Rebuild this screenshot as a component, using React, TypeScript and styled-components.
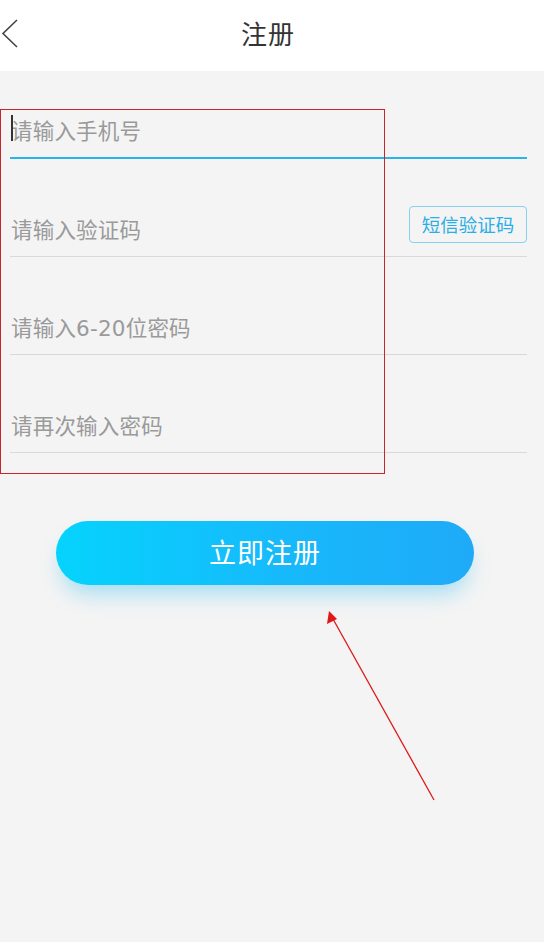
import React from 'react'
import styled, {createGlobalStyle} from 'styled-components'

const GlobalStyle = createGlobalStyle`
  html, body {
    margin: 0;
    padding: 0;
    background: #f4f4f4;
  }
  * {
    box-sizing: border-box;
  }
`

const font = `"Noto Sans CJK SC", "Noto Sans", sans-serif`
// latin digits in the inputs are the wider DejaVu ones, CJK falls through
const inputFont = `"DejaVu Sans", "Noto Sans CJK SC", sans-serif`

const Page = styled.div`
  position: relative;
  width: 544px;
  min-height: 942px;
  background: #f4f4f4;
  font-family: ${font};
  overflow: hidden;
`

const NavBar = styled.div`
  position: relative;
  height: 71px;
  background: #fff;
  display: flex;
  align-items: center;
  justify-content: center;
`

const BackButton = styled.button`
  position: absolute;
  left: 0;
  top: 18px;
  width: 24px;
  height: 32px;
  padding: 0;
  border: 0;
  background: transparent;
  display: flex;
  align-items: center;
  cursor: pointer;
`

const Title = styled.h1`
  margin: -6px 0 0 -8px;
  font-size: 26px;
  font-weight: 400;
  color: #333;
  letter-spacing: 1px;
`

const Form = styled.div`
  display: flex;
  flex-direction: column;
  gap: 41px;
  padding: 30px 17px 0 10px;
`

const Row = styled.div<{$active?: boolean}>`
  position: relative;
  height: ${p => (p.$active ? 58 : 57)}px;
  display: flex;
  align-items: center;
  border-bottom: ${p => (p.$active ? '2px solid #2bb4ea' : '1px solid #d9d9d9')};
`

const Field = styled.input`
  flex: 1;
  min-width: 0;
  height: 100%;
  padding: 4px 0 0 1px;
  border: 0;
  outline: none;
  background: transparent;
  font-family: ${inputFont};
  font-size: 21.5px;
  letter-spacing: 0.2px;
  color: #333;

  &::placeholder {
    color: #9a9a9a;
  }
`

const Caret = styled.span`
  position: absolute;
  left: 1px;
  top: 14px;
  width: 1.5px;
  height: 26px;
  background: #333;
`

const SmsButton = styled.button`
  align-self: flex-end;
  margin-bottom: 13px;
  width: 118px;
  height: 37px;
  padding: 0 0 2px;
  border: 1px solid #86d0f0;
  border-radius: 4px;
  background: transparent;
  font-family: ${font};
  font-size: 18.5px;
  color: #2aaee6;
  cursor: pointer;
`

const SubmitButton = styled.button`
  display: block;
  margin: 68px 0 0 56px;
  width: 418px;
  height: 64px;
  padding: 0 0 4px;
  border: 0;
  border-radius: 32px;
  background: linear-gradient(90deg, #05d3fd 0%, #17b9fb 55%, #1faaf8 100%);
  box-shadow: 0 14px 22px -6px rgba(0, 178, 240, 0.35);
  font-family: ${font};
  font-size: 27px;
  color: #fff;
  letter-spacing: 1px;
  cursor: pointer;
`

const Highlight = styled.div`
  position: absolute;
  left: 0;
  top: 109px;
  width: 385px;
  height: 365px;
  border: 1px solid #c3262b;
  pointer-events: none;
`

const Pointer = styled.svg`
  position: absolute;
  left: 0;
  top: 0;
  pointer-events: none;
`

const fields = [
  {placeholder: '请输入手机号', active: true},
  {placeholder: '请输入验证码', sms: true},
  {placeholder: '请输入6-20位密码', type: 'password'},
  {placeholder: '请再次输入密码', type: 'password'},
]

export default function App() {
  return (
    <Page>
      <GlobalStyle />
      <NavBar>
        <BackButton aria-label="返回">
          <svg width="20" height="30" viewBox="0 0 20 30">
            <path d="M17 1 L3 14.5 L17 28" fill="none" stroke="#444" strokeWidth="1.6" />
          </svg>
        </BackButton>
        <Title>注册</Title>
      </NavBar>

      <Form>
        {fields.map(f => (
          <Row key={f.placeholder} $active={f.active}>
            {f.active && <Caret />}
            <Field placeholder={f.placeholder} type={f.type || 'text'} />
            {f.sms && <SmsButton>短信验证码</SmsButton>}
          </Row>
        ))}
      </Form>

      <SubmitButton>立即注册</SubmitButton>

      <Highlight />
      <Pointer width="544" height="942">
        <line x1="434" y1="800" x2="333" y2="619" stroke="#e01818" strokeWidth="1.3" />
        <polygon points="329,611 327,624 337,619" fill="#e01818" />
      </Pointer>
    </Page>
  )
}
